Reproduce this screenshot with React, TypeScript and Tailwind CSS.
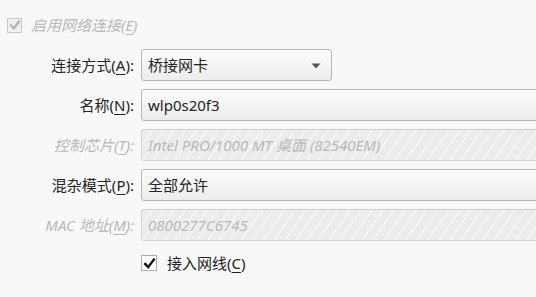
import React from 'react';

const font = "font-['Noto_Sans','Noto_Sans_CJK_SC',sans-serif]";

function Mn({ k }: { k: string }) {
    return (
        <>
            (<span className="underline underline-offset-[3px] decoration-1">{k}</span>)
        </>
    );
}

function CheckMark({ color, size }: { color: string; size: number }) {
    return (
        <svg width={size} height={size} viewBox="0 0 12 12">
            <path d="M2 6.4 L4.8 9.4 L10 2.4" fill="none" stroke={color} strokeWidth="2.2" strokeLinecap="square" />
        </svg>
    );
}

function Label({ children, disabled }: { children: React.ReactNode; disabled?: boolean }) {
    return (
        <div
            className={`flex items-center justify-end h-[32px] whitespace-nowrap ${
                disabled ? 'italic text-[#b9b9b9]' : 'text-[#232323]'
            }`}
        >
            {children}
        </div>
    );
}

function Field({ value, combo, width }: { value: string; combo?: boolean; width?: string }) {
    return (
        <div
            className={`relative flex items-center h-[32px] ${width ?? 'w-[420px]'} rounded-[3px] border border-[#b6b6b6] bg-[linear-gradient(#fcfcfc,#ededed)] pl-[6px] text-[#232323]`}
        >
            {value}
            {combo && (
                <svg className="absolute right-[10px] top-[13px]" width="10" height="6" viewBox="0 0 10 6">
                    <path d="M0.5 0.5 H9.5 L5 5.5 Z" fill="#555" />
                </svg>
            )}
        </div>
    );
}

function DisabledField({ value }: { value: string }) {
    return (
        <div className="flex items-center h-[32px] w-[420px] rounded-[3px] border border-[#d0d0d0] bg-[#ececec] bg-[repeating-linear-gradient(125deg,transparent_0px,transparent_8px,#fbfbfb_8px,#fbfbfb_9px)] pl-[6px] italic text-[#b8b8b8]">
            {value}
        </div>
    );
}

export default function App() {
    return (
        <div className={`w-[536px] h-[297px] overflow-hidden bg-[#f8f8f8] text-[15px] leading-none ${font}`}>
            <div className="flex items-center h-[16px] mt-[17px] pl-[7px] gap-[9px]">
                <div className="flex items-center justify-center w-[15px] h-[15px] border border-[#c9c9c9] bg-[#efefef]">
                    <CheckMark color="#b0b0b0" size={12} />
                </div>
                <span className="italic text-[#b9b9b9]">
                    启用网络连接<Mn k="E" />
                </span>
            </div>

            <div className="grid grid-cols-[134px_1fr] gap-x-[7px] gap-y-[8px] mt-[16px]">
                <Label>
                    连接方式<Mn k="A" />:
                </Label>
                <Field value="桥接网卡" combo width="w-[191px]" />

                <Label>
                    名称<Mn k="N" />:
                </Label>
                <Field value="wlp0s20f3" />

                <Label disabled>
                    控制芯片<Mn k="T" />:
                </Label>
                <DisabledField value="Intel PRO/1000 MT 桌面 (82540EM)" />

                <Label>
                    混杂模式<Mn k="P" />:
                </Label>
                <Field value="全部允许" />

                <Label disabled>
                    MAC 地址<Mn k="M" />:
                </Label>
                <DisabledField value="0800277C6745" />

                <div />
                <div className="flex items-center gap-[10px] h-[16px] mt-[6px]">
                    <div className="flex items-center justify-center w-[16px] h-[16px] border border-[#adadad] bg-white">
                        <CheckMark color="#111" size={13} />
                    </div>
                    <span className="text-[#232323]">
                        接入网线<Mn k="C" />
                    </span>
                </div>
            </div>
        </div>
    );
}
